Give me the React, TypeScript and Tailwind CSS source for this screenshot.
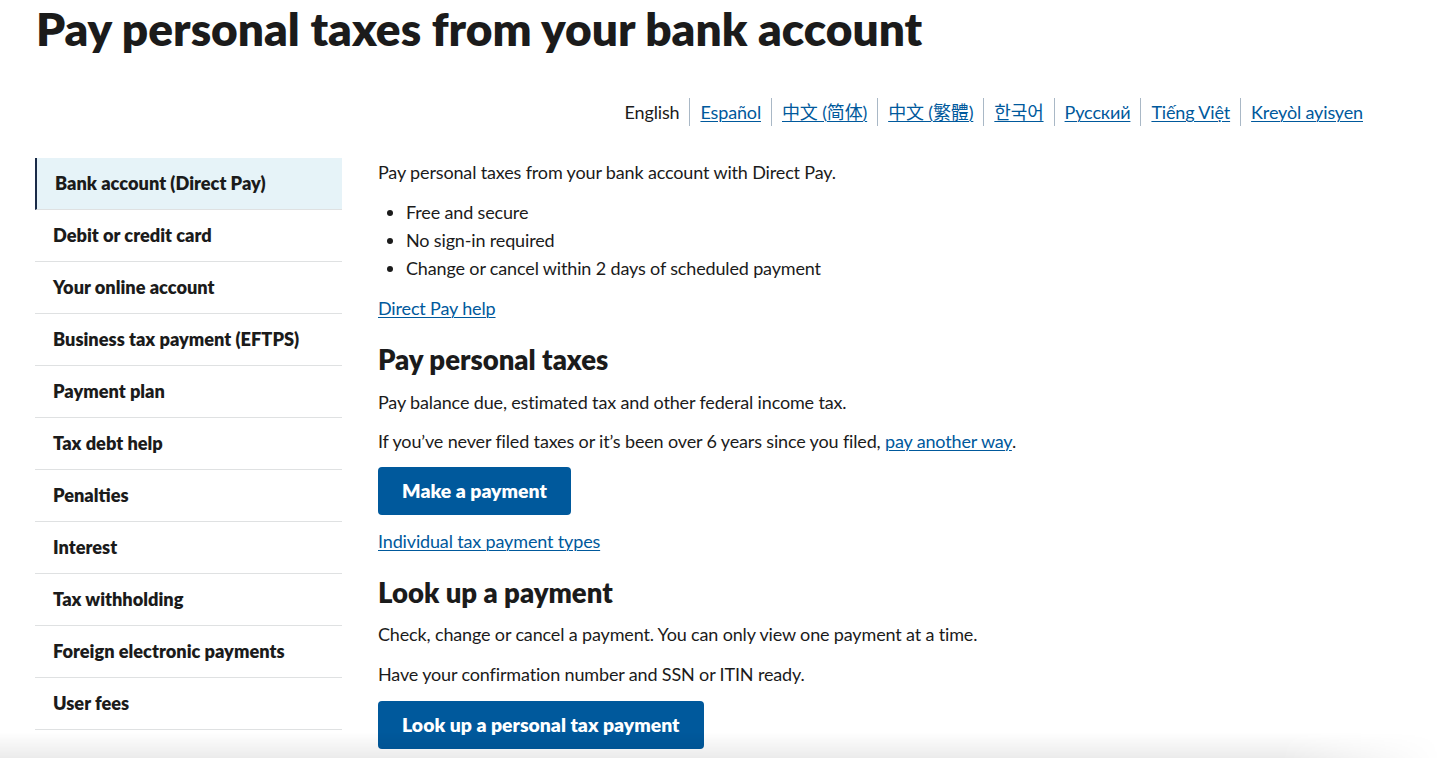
import React from 'react';

const languages = [
  { label: 'English', current: true },
  { label: 'Español' },
  { label: '中文 (简体)' },
  { label: '中文 (繁體)' },
  { label: '한국어' },
  { label: 'Русский' },
  { label: 'Tiếng Việt' },
  { label: 'Kreyòl ayisyen' },
];

const navItems = [
  'Bank account (Direct Pay)',
  'Debit or credit card',
  'Your online account',
  'Business tax payment (EFTPS)',
  'Payment plan',
  'Tax debt help',
  'Penalties',
  'Interest',
  'Tax withholding',
  'Foreign electronic payments',
  'User fees',
];

const Link: React.FC<{ children: React.ReactNode }> = ({ children }) => (
  <a href="#" className="text-[#00599c] underline underline-offset-2 decoration-1">
    {children}
  </a>
);

const Button: React.FC<{ children: React.ReactNode }> = ({ children }) => (
  <button className="h-12 px-6 rounded-[4px] bg-[#00599c] text-white font-extrabold text-[19.4px] leading-none">
    {children}
  </button>
);

export default function App() {
  return (
    <div className="relative min-h-screen overflow-hidden bg-white text-[#1b1b1b] font-['Lato','Noto_Sans_CJK_SC',sans-serif]">
      <h1 className="pl-[36px] text-[46px] font-extrabold leading-[58px]">
        Pay personal taxes from your bank account
      </h1>

      <nav className="mt-10 flex justify-end pr-[93px] text-[18px] leading-[28px] tracking-[-0.15px]">
        {languages.map((lang, i) => (
          <div
            key={lang.label}
            className={`px-[10px] last:pr-0 ${i > 0 ? 'border-l border-[#a9b8c6]' : ''}`}
          >
            {lang.current ? <span>{lang.label}</span> : <Link>{lang.label}</Link>}
          </div>
        ))}
      </nav>

      <div className="mt-8 flex pl-[35px]">
        <ul className="w-[307px] shrink-0">
          {navItems.map((item, i) => (
            <li
              key={item}
              className={`h-[52px] flex items-center border-b border-[#dfe1e2] text-[18.2px] font-extrabold ${
                i === 0 ? 'bg-[#e6f3f8] border-l-2 border-l-[#1a2b48] pl-[18px]' : 'pl-[18px]'
              }`}
            >
              {item}
            </li>
          ))}
        </ul>

        <main className="ml-[36px] text-[18px] leading-[28px] tracking-[-0.15px]">
          <p>Pay personal taxes from your bank account with Direct Pay.</p>
          <ul className="mt-3 list-disc pl-[28px]">
            <li>Free and secure</li>
            <li>No sign-in required</li>
            <li>Change or cancel within 2 days of scheduled payment</li>
          </ul>
          <p className="mt-3">
            <Link>Direct Pay help</Link>
          </p>

          <h2 className="mt-[21px] text-[27.5px] font-extrabold leading-[34px] tracking-normal">Pay personal taxes</h2>
          <p className="mt-[11px]">Pay balance due, estimated tax and other federal income tax.</p>
          <p className="mt-[11px]">
            If you’ve never filed taxes or it’s been over 6 years since you filed, <Link>pay another way</Link>.
          </p>
          <div className="mt-3 tracking-normal">
            <Button>Make a payment</Button>
          </div>
          <p className="mt-3">
            <Link>Individual tax payment types</Link>
          </p>

          <h2 className="mt-[21px] text-[27.5px] font-extrabold leading-[34px] tracking-normal">Look up a payment</h2>
          <p className="mt-[10px]">Check, change or cancel a payment. You can only view one payment at a time.</p>
          <p className="mt-3">Have your confirmation number and SSN or ITIN ready.</p>
          <div className="mt-[13px] tracking-normal">
            <Button>Look up a personal tax payment</Button>
          </div>
        </main>
      </div>

      <div className="pointer-events-none absolute inset-x-0 bottom-0 h-[26px] bg-[linear-gradient(to_bottom,rgba(0,0,0,0),rgba(0,0,0,0.08))] [mask-image:linear-gradient(to_right,black_88%,transparent_99%)]" />
    </div>
  );
}
